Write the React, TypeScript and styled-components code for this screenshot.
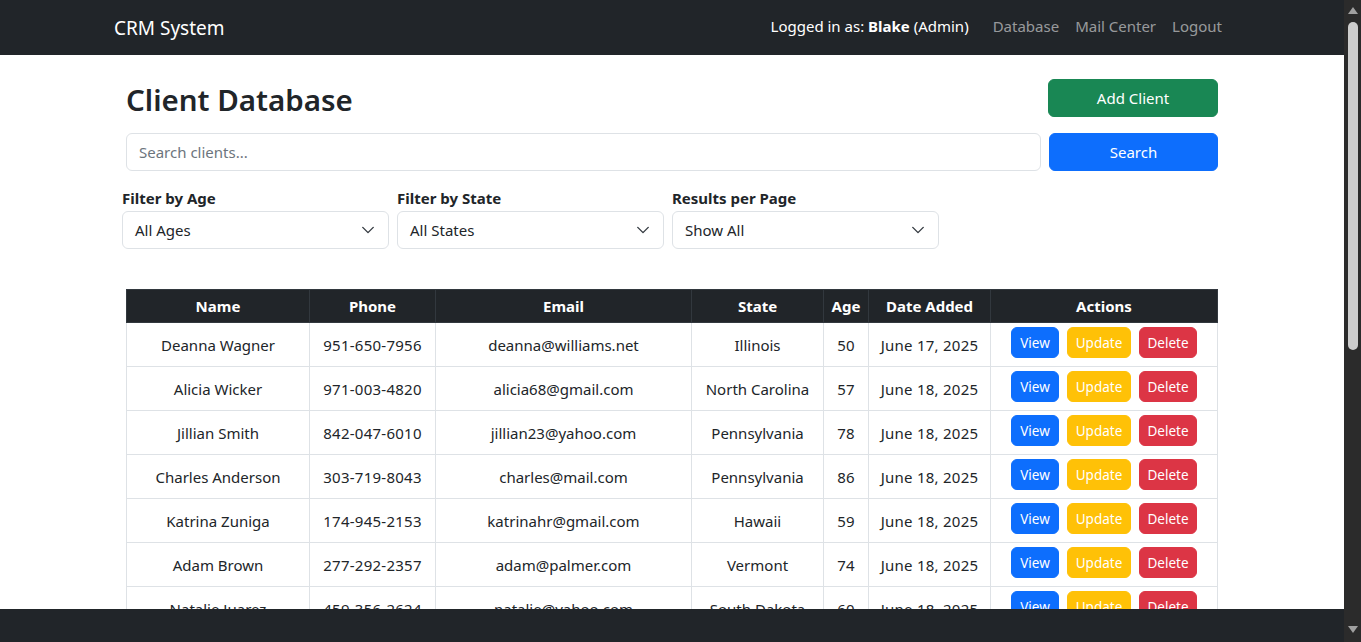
import styled, { createGlobalStyle } from 'styled-components'

const GlobalStyle = createGlobalStyle`
    *{
        box-sizing: border-box;
    }
    html, body{
        margin: 0;
        padding: 0;
        height: 100%;
        overflow: hidden;
    }
    body{
        font-family: "Noto Sans", "Open Sans", sans-serif;
        font-size: 15px;
        color: #212529;
        background: #fff;
    }
`

const Page = styled.div`
    display: flex;
    width: 100vw;
    height: 100vh;
`

const Main = styled.div`
    flex: 1;
    min-width: 0;
    display: flex;
    flex-direction: column;
`

const Navbar = styled.nav`
    flex: none;
    height: 55px;
    background: #212529;
    display: flex;
    align-items: center;
    justify-content: space-between;
    padding: 0 122px 0 114px;
`

const Brand = styled.div`
    color: #fff;
    font-size: 19px;
`

const NavRight = styled.div`
    display: flex;
    align-items: center;
    padding-bottom: 3px;
`

const LoggedIn = styled.span`
    color: #fff;
    margin-right: 24px;
    b{
        font-weight: 700;
    }
`

const NavLink = styled.a`
    color: rgba(255,255,255,.55);
    margin-left: 16px;
    &:first-of-type{
        margin-left: 0;
    }
`

const Content = styled.main`
    flex: 1;
    min-height: 0;
    overflow: hidden;
    padding: 24px 126px 0 126px;
`

const TitleRow = styled.div`
    display: flex;
    align-items: center;
    justify-content: space-between;
    height: 38px;
`

const Title = styled.h1`
    margin: 2px 0 0;
    font-size: 29.5px;
    font-weight: 600;
`

const Button = styled.button<{ $color: string }>`
    font: inherit;
    color: #fff;
    background: ${p => p.$color};
    border: 1px solid ${p => p.$color};
    border-radius: 6px;
    cursor: pointer;
`

const WideButton = styled(Button)<{ $width: number }>`
    width: ${p => p.$width}px;
    height: 38px;
    flex: none;
`

const SearchRow = styled.form`
    display: flex;
    gap: 8px;
    margin-top: 16px;
`

const SearchInput = styled.input`
    flex: 1;
    height: 38px;
    font: inherit;
    padding: 0 12px;
    border: 1px solid #dee2e6;
    border-radius: 6px;
    color: #212529;
    &::placeholder{
        color: #6c757d;
    }
`

const Filters = styled.div`
    display: flex;
    gap: 8px;
    margin: 17px 0 0 -4px;
`

const Filter = styled.div`
    width: 267px;
`

const FilterLabel = styled.div`
    font-weight: 700;
    line-height: 21px;
    height: 23px;
`

const FakeSelect = styled.div`
    height: 38px;
    padding: 0 13px 0 12px;
    border: 1px solid #dee2e6;
    border-radius: 6px;
    display: flex;
    align-items: center;
    justify-content: space-between;
`

const Table = styled.table`
    width: calc(100% - 1px);
    margin-top: 40px;
    border-collapse: collapse;
    table-layout: fixed;
    text-align: center;
    th{
        background: #212529;
        color: #fff;
        font-weight: 700;
        height: 33px;
        padding: 0;
        border: 1px solid #32383e;
    }
    td{
        height: 44px;
        padding: 0;
        border: 1px solid #dee2e6;
    }
`

const Cell = styled.td<{ $numeric: boolean }>`
    letter-spacing: ${p => (p.$numeric ? '.25px' : '0')};
`

const Actions = styled.div`
    display: flex;
    justify-content: center;
    gap: 8px;
    margin-top: -4px;
`

const SmallButton = styled(Button)<{ $width: number }>`
    width: ${p => p.$width}px;
    height: 31px;
    font-size: 13.5px;
    padding: 0;
`

const Footer = styled.footer`
    flex: none;
    height: 33px;
    background: #212529;
`

const Scrollbar = styled.div`
    flex: none;
    width: 17px;
    background: #2b2b2b;
    display: flex;
    flex-direction: column;
    align-items: center;
`

const ScrollArrow = styled.div<{ $height: number }>`
    flex: none;
    height: ${p => p.$height}px;
    display: flex;
    align-items: center;
    justify-content: center;
`

const ScrollTrack = styled.div`
    flex: 1;
    width: 100%;
    display: flex;
    flex-direction: column;
    align-items: center;
`

const ScrollThumb = styled.div`
    width: 10px;
    height: 328px;
    margin-top: 1px;
    background: #cdcdcd;
    border-radius: 5px;
`

const clients = [
    ['Deanna Wagner', '951-650-7956', 'deanna@williams.net', 'Illinois', '50', 'June 17, 2025'],
    ['Alicia Wicker', '971-003-4820', 'alicia68@gmail.com', 'North Carolina', '57', 'June 18, 2025'],
    ['Jillian Smith', '842-047-6010', 'jillian23@yahoo.com', 'Pennsylvania', '78', 'June 18, 2025'],
    ['Charles Anderson', '303-719-8043', 'charles@mail.com', 'Pennsylvania', '86', 'June 18, 2025'],
    ['Katrina Zuniga', '174-945-2153', 'katrinahr@gmail.com', 'Hawaii', '59', 'June 18, 2025'],
    ['Adam Brown', '277-292-2357', 'adam@palmer.com', 'Vermont', '74', 'June 18, 2025'],
    ['Natalie Juarez', '459-356-2624', 'natalie@yahoo.com', 'South Dakota', '60', 'June 18, 2025'],
]

const columns = [
    ['Name', 183], ['Phone', 126], ['Email', 256], ['State', 132], ['Age', 45], ['Date Added', 122], ['Actions', 227],
] as const

const filters = [
    ['Filter by Age', 'All Ages'],
    ['Filter by State', 'All States'],
    ['Results per Page', 'Show All'],
]

const Chevron = () => (
    <svg width="14" height="14" viewBox="0 0 16 16" fill="none" stroke="#343a40" strokeWidth="1.6" strokeLinecap="round" strokeLinejoin="round">
        <path d="m2 5 6 6 6-6" />
    </svg>
)

const App = () => {
    return (
        <Page>
            <GlobalStyle />
            <Main>
                <Navbar>
                    <Brand>CRM System</Brand>
                    <NavRight>
                        <LoggedIn>Logged in as: <b>Blake</b> (Admin)</LoggedIn>
                        <NavLink>Database</NavLink>
                        <NavLink>Mail Center</NavLink>
                        <NavLink>Logout</NavLink>
                    </NavRight>
                </Navbar>
                <Content>
                    <TitleRow>
                        <Title>Client Database</Title>
                        <WideButton $color="#198754" $width={170}>Add Client</WideButton>
                    </TitleRow>
                    <SearchRow>
                        <SearchInput placeholder="Search clients..." />
                        <WideButton $color="#0d6efd" $width={169}>Search</WideButton>
                    </SearchRow>
                    <Filters>
                        {filters.map(([label, value]) => (
                            <Filter key={label}>
                                <FilterLabel>{label}</FilterLabel>
                                <FakeSelect>{value}<Chevron /></FakeSelect>
                            </Filter>
                        ))}
                    </Filters>
                    <Table>
                        <colgroup>
                            {columns.map(([name, w]) => <col key={name} width={w} />)}
                        </colgroup>
                        <thead>
                            <tr>{columns.map(([name]) => <th key={name}>{name}</th>)}</tr>
                        </thead>
                        <tbody>
                            {clients.map(row => (
                                <tr key={row[0]}>
                                    {row.map((cell, i) => <Cell key={i} $numeric={i === 1 || i === 4 || i === 5}>{cell}</Cell>)}
                                    <td>
                                        <Actions>
                                            <SmallButton $color="#0d6efd" $width={48}>View</SmallButton>
                                            <SmallButton $color="#ffc107" $width={64}>Update</SmallButton>
                                            <SmallButton $color="#dc3545" $width={58}>Delete</SmallButton>
                                        </Actions>
                                    </td>
                                </tr>
                            ))}
                        </tbody>
                    </Table>
                </Content>
                <Footer />
            </Main>
            <Scrollbar>
                <ScrollArrow $height={21}>
                    <svg width="10" height="7" viewBox="0 0 10 7"><path d="M5 0 10 7H0z" fill="#a0a0a0" /></svg>
                </ScrollArrow>
                <ScrollTrack>
                    <ScrollThumb />
                </ScrollTrack>
                <ScrollArrow $height={25}>
                    <svg width="10" height="7" viewBox="0 0 10 7"><path d="M0 0h10L5 7z" fill="#a0a0a0" /></svg>
                </ScrollArrow>
            </Scrollbar>
        </Page>
    )
}

export default App
